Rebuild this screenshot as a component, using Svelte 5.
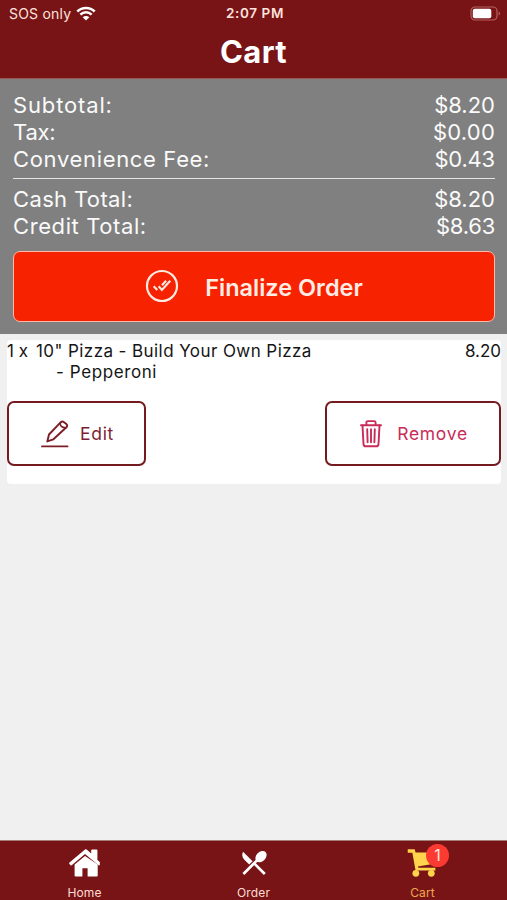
<script>
  let fees = [
    { label: 'Subtotal:', amount: '$8.20', labelSpace: 0.85, amountSpace: 0 },
    { label: 'Tax:', amount: '$0.00', labelSpace: -0.2, amountSpace: 0.2 },
    { label: 'Convenience Fee:', amount: '$0.43', labelSpace: 0.66, amountSpace: -0.2 }
  ];

  let totals = [
    { label: 'Cash Total:', amount: '$8.20', labelSpace: 0.36, amountSpace: 0 },
    { label: 'Credit Total:', amount: '$8.63', labelSpace: 0.6, amountSpace: -0.25 }
  ];

  let cart = [
    { qty: 1, name: '10" Pizza - Build Your Own Pizza', options: ['Pepperoni'], price: '8.20' }
  ];

  let activeTab = 'Cart';
</script>

{#snippet row(item)}
  <div class="row">
    <span style="letter-spacing: {item.labelSpace}px">{item.label}</span>
    <span style="letter-spacing: {item.amountSpace}px">{item.amount}</span>
  </div>
{/snippet}

<main class="screen">
  <header>
    <div class="status">
      <div class="network">
        <span>SOS only</span>
        <svg width="20" height="15" viewBox="0 0 20 15">
          <g fill="none" stroke="#fff" stroke-width="2.5">
            <path d="M1.3 5.5a12.3 12.3 0 0 1 17.4 0" />
            <path d="M4.4 8.7a7.9 7.9 0 0 1 11.2 0" />
          </g>
          <path d="M10 14.6l-3.3-3.3a4.7 4.7 0 0 1 6.6 0z" fill="#fff" />
        </svg>
      </div>
      <span class="time">2:07 PM</span>
      <svg class="battery" width="31" height="15" viewBox="0 0 31 15">
        <rect x="1" y="1" width="26" height="13" rx="4" fill="none" stroke="#b5615f" stroke-width="1.2" />
        <rect x="2.8" y="2.8" width="18.5" height="9.4" rx="2" fill="#fff" />
        <path d="M28.6 5.5q3 2 0 4z" fill="#b5615f" />
      </svg>
    </div>
    <h1>Cart</h1>
  </header>

  <section class="summary">
    {#each fees as item}
      {@render row(item)}
    {/each}
    <hr />
    {#each totals as item}
      {@render row(item)}
    {/each}
    <button class="finalize">
      <svg width="34" height="34" viewBox="0 0 34 34" fill="none" stroke="#ffe9e0">
        <circle cx="17" cy="17" r="15" stroke-width="2.2" />
        <path d="M8.7 17.3l3.6 3.7M13.7 17.2l3.2 3.8 8.4-9.2M17 16.2l4.1-4.4" stroke-width="2.1" />
      </svg>
      <span>Finalize Order</span>
    </button>
  </section>

  {#each cart as item}
    <article class="item">
      <div class="line">
        <span class="qty">{item.qty} x</span>
        <span class="name">{item.name}</span>
        <span class="price">{item.price}</span>
      </div>
      {#each item.options as option}
        <div class="option">- {option}</div>
      {/each}
      <div class="actions">
        <button class="edit">
          <svg width="28" height="28" viewBox="0 0 28 28" fill="none" stroke="#7d1e27" stroke-width="1.9" stroke-linecap="round" stroke-linejoin="round">
            <path d="M1 26.4h25.5" />
            <path d="M6.3 21.4l1.7-6.9L19.8 2.2q1.3-1.2 2.8-.3l2.8 2.2q1.4 1.3.3 2.9L12.4 19.3z" />
            <path d="M19.4 2.8q-1 4.6 5.6 5" stroke-width="1.6" />
          </svg>
          <span>Edit</span>
        </button>
        <button class="remove">
          <svg width="22" height="28" viewBox="0 0 22 28" fill="none" stroke="#c92c58" stroke-width="1.9" stroke-linecap="round" stroke-linejoin="round">
            <path d="M1 5.2h20M6.4 5V2.6q0-1.5 1.5-1.5h6.2q1.5 0 1.5 1.5V5" />
            <path d="M2.5 5.5l1 18.6q.1 2.2 2.2 2.2h10.6q2.1 0 2.2-2.2l1-18.6" />
            <path d="M7.2 9.3l.4 13M11 9.3v13M14.8 9.3l-.4 13" />
          </svg>
          <span>Remove</span>
        </button>
      </div>
    </article>
  {/each}

  <nav>
    <a href="#home" class:active={activeTab === 'Home'}>
      <svg width="32" height="28" viewBox="0 0 32 28" fill="currentColor">
        <path d="M16 .6L.5 13.6q-.6.6-.1 1.3l1 1.2q.6.7 1.3.1L16 5.1l13.5 11.1q.7.5 1.3-.1V13l-2.4-2.1V1.2q0-.8-.8-.8H23q-.8 0-.8.8v3.2L17.7.6q-.9-.7-1.7 0z" />
        <path d="M16 7L5.6 15.6v10.9q0 1 1 1h6.8v-8.3h5.2v8.3h9.1q1 0 1-1V15.6z" />
      </svg>
      <span>Home</span>
    </a>
    <a href="#order" class:active={activeTab === 'Order'}>
      <svg width="26" height="28" viewBox="0 0 26 28">
        <path d="M2 2.8q-2 4.4 1.4 8l4.8 4.8 3.4-3.4z" fill="currentColor" />
        <path d="M2.4 25L17 10.4M13.4 14.6L23.8 25" fill="none" stroke="currentColor" stroke-width="2.7" />
        <ellipse cx="20" cy="7.6" rx="6.4" ry="4.7" transform="rotate(-45 20 7.6)" fill="currentColor" />
      </svg>
      <span>Order</span>
    </a>
    <a href="#cart" class:active={activeTab === 'Cart'}>
      <svg width="32" height="29" viewBox="0 0 32 29" fill="currentColor">
        <path d="M.2.3h7.2l.9 3.2H29L27.2 15.2 10.6 18l.6 1.5h17.6v2.7H8.3L5 3.9H.2z" />
        <circle cx="8.6" cy="25.2" r="3.5" />
        <circle cx="24.6" cy="25.2" r="3.5" />
      </svg>
      <span>Cart</span>
      <b class="badge">1</b>
    </a>
  </nav>
</main>

<style>
  :global(body) {
    margin: 0;
  }

  .screen {
    display: flex;
    flex-direction: column;
    height: 900px;
    background: #f0f0f0;
    font-family: Inter, sans-serif;
  }

  header {
    height: 78px;
    flex: none;
    background: #781416;
    border-bottom: 1px solid #985654;
    color: #fff;
  }

  .status {
    display: grid;
    grid-template-columns: 1fr auto 1fr;
    align-items: center;
    height: 26px;
    padding: 0 6px 0 9px;
    font-size: 14px;
    color: #ffe2dc;
  }

  .network {
    display: flex;
    align-items: center;
    gap: 5px;
    letter-spacing: 0.2px;
  }

  .time {
    font-weight: 600;
    font-size: 13.5px;
    letter-spacing: 0.6px;
  }

  .battery {
    justify-self: end;
  }

  h1 {
    margin: 7px 0 0;
    text-align: center;
    font-size: 31px;
    line-height: 38px;
    font-weight: 700;
    letter-spacing: 0.4px;
  }

  .summary {
    height: 255px;
    flex: none;
    box-sizing: border-box;
    padding: 13px 12px 0 13px;
    background: #808080;
    color: #fafafa;
  }

  .row {
    display: flex;
    justify-content: space-between;
    font-size: 22px;
    line-height: 27px;
  }

  hr {
    margin: 5px 0 7px;
    border: 0;
    height: 1px;
    background: #e4e4e4;
  }

  button {
    display: flex;
    align-items: center;
    justify-content: center;
    box-sizing: border-box;
    padding: 0;
    font-family: inherit;
  }

  .finalize {
    width: 100%;
    height: 71px;
    margin-top: 11px;
    padding-bottom: 1px;
    gap: 26px;
    border: 1.5px solid #ffb9a9;
    border-radius: 7px;
    background: #f72300;
    color: #ffece4;
    font-size: 23.5px;
    font-weight: 600;
  }

  .finalize span {
    padding-top: 2px;
  }

  .item {
    margin: 6px 6px 0 7px;
    padding-top: 1px;
    height: 144px;
    box-sizing: border-box;
    border-radius: 4px;
    background: #fff;
    color: #151515;
    font-size: 17px;
    line-height: 21px;
  }

  .line {
    display: flex;
  }

  .qty {
    width: 29px;
  }

  .name {
    letter-spacing: 0.42px;
  }

  .price {
    margin-left: auto;
  }

  .option {
    padding-left: 49px;
    letter-spacing: 0.6px;
  }

  .actions {
    display: flex;
    justify-content: space-between;
    margin-top: 18px;
  }

  .actions button {
    height: 65px;
    padding-left: 2px;
    border: 2px solid #751b20;
    border-radius: 7px;
    background: #fff;
    font-size: 17.5px;
    letter-spacing: 0.7px;
  }

  .actions .edit {
    width: 139px;
    gap: 11px;
    color: #7d1e35;
  }

  .actions .remove {
    width: 176px;
    gap: 15px;
    color: #c92c58;
  }

  nav {
    display: grid;
    grid-template-columns: repeat(3, 1fr);
    height: 59px;
    margin-top: auto;
    border-top: 1px solid #a57e77;
    background: #781416;
  }

  nav a {
    position: relative;
    display: flex;
    flex-direction: column;
    align-items: center;
    color: #fff;
    font-size: 12px;
    text-decoration: none;
  }

  nav svg {
    height: 28px;
    margin-top: 8px;
  }

  nav a span {
    margin-top: 8px;
    line-height: 15px;
    letter-spacing: 0.15px;
    color: #ffdcd5;
  }

  nav a.active {
    color: #ffd44c;
  }

  nav a.active span {
    color: #efa84f;
  }

  .badge {
    position: absolute;
    left: 88px;
    top: 3px;
    width: 23px;
    height: 23px;
    border-radius: 50%;
    background: #fb3b32;
    color: #ffe4dd;
    font-size: 16px;
    font-weight: 400;
    line-height: 23px;
    text-align: center;
  }
</style>
